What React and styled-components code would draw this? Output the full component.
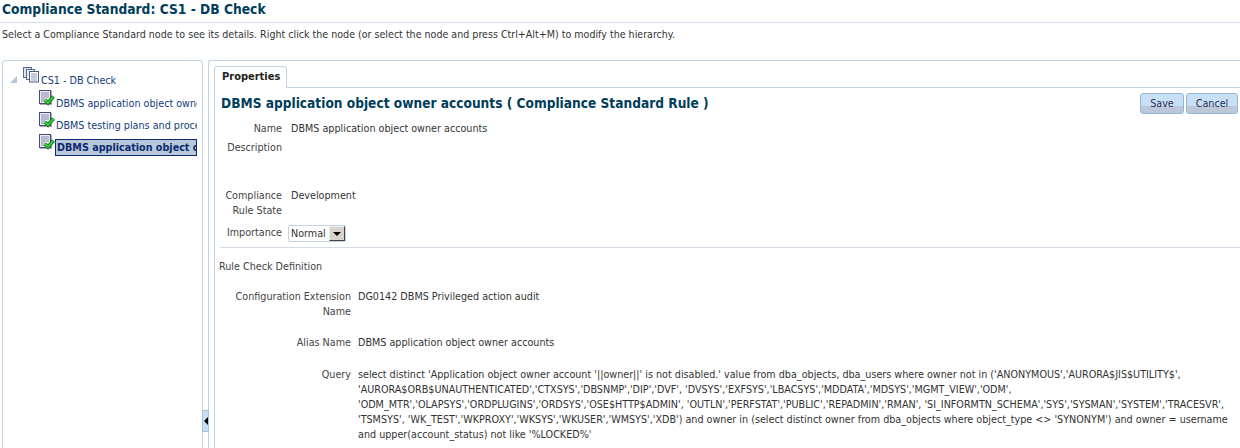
import React from "react";
import styled, { createGlobalStyle } from "styled-components";

const GlobalStyle = createGlobalStyle`
  html, body {
    margin: 0;
    padding: 0;
    background: #fff;
    overflow: hidden;
  }
  body {
    font-family: "DejaVu Sans Condensed", "DejaVu Sans", sans-serif;
    font-size: 10.7px;
    color: #333;
  }
`;

const Page = styled.div`
  width: 1240px;
  height: 448px;
  display: flex;
  flex-direction: column;
  overflow: hidden;
`;

const Title = styled.h1`
  margin: 0;
  padding: 0 0 0 2px;
  height: 23px;
  box-sizing: border-box;
  border-bottom: 1px solid #d6dbe8;
  font-size: 13.7px;
  line-height: 19px;
  font-weight: bold;
  color: #003d5b;
`;

const Hint = styled.div`
  padding-left: 2px;
  height: 37px;
  line-height: 22px;
  font-size: 10.6px;
`;

const Split = styled.div`
  flex: 1;
  display: flex;
  padding-left: 2px;
  min-height: 0;
`;

const TreePanel = styled.div`
  width: 201px;
  flex: none;
  box-sizing: border-box;
  border: 1px solid #c4d3e4;
  border-bottom: none;
  border-radius: 3px 3px 0 0;
  padding: 7px 5px 0 6px;
  overflow: hidden;
`;

const Splitter = styled.div`
  width: 5px;
  flex: none;
  display: flex;
  align-items: flex-end;
  padding-bottom: 16px;
  box-sizing: border-box;
`;

const SplitHandle = styled.div`
  width: 7px;
  height: 22px;
  flex: none;
  margin-left: -1px;
  position: relative;
  z-index: 1;
  box-sizing: border-box;
  background: #c8dff2;
  border: 1px solid #a3c4e0;
  display: flex;
  align-items: center;
  justify-content: center;
  &::before {
    content: "";
    border-style: solid;
    border-width: 4px 4px 4px 0;
    border-color: transparent #000 transparent transparent;
  }
`;

const RightPanel = styled.div`
  flex: 1;
  min-width: 0;
  box-sizing: border-box;
  border-left: 1px solid #c4d3e4;
  border-top: 1px solid #c4d3e4;
  border-radius: 3px 0 0 0;
  padding: 5px 0 0 5px;
  display: flex;
  flex-direction: column;
`;

const TabStrip = styled.div`
  display: flex;
  height: 21px;
  flex: none;
  border-bottom: 1px solid #c4d3e4;
`;

const Tab = styled.div`
  width: 73px;
  height: 22px;
  box-sizing: border-box;
  border: 1px solid #c4d3e4;
  border-bottom: none;
  border-radius: 3px 3px 0 0;
  background: #fff;
  font-size: 11px;
  font-weight: bold;
  color: #222;
  line-height: 20px;
  padding-left: 7px;
`;

const TabBody = styled.div`
  flex: 1;
  min-height: 0;
  border-left: 1px solid #c4d3e4;
  padding-left: 5px;
  display: flex;
  flex-direction: column;
`;

const HeadRow = styled.div`
  display: flex;
  justify-content: space-between;
  align-items: center;
  height: 31px;
  flex: none;
`;

const RuleTitle = styled.h2`
  margin: 0 0 2px;
  padding-left: 1px;
  font-size: 13.6px;
  font-weight: bold;
  color: #003d5b;
`;

const Buttons = styled.div`
  display: flex;
  gap: 2px;
  padding-right: 2px;
`;

const Button = styled.button`
  width: ${(p) => p.$w}px;
  height: 21px;
  padding: 0;
  border: 1px solid #90b8d8;
  border-radius: 3px;
  background: linear-gradient(#c8e0f4 0 63%, #bcc8d8 63% 100%);
  color: #2b2b55;
  font: inherit;
`;

const FormRow = styled.div`
  display: grid;
  grid-template-columns: ${(p) => p.$label}px 1fr;
  column-gap: ${(p) => p.$gap}px;
  margin-top: ${(p) => p.$top || 0}px;
  line-height: 15px;
`;

const Label = styled.div`
  text-align: right;
  color: #444;
`;

const Value = styled.div`
  color: #333;
  white-space: nowrap;
`;

const QueryLine = styled.div`
  height: 15px;
  line-height: 15px;
  white-space: nowrap;
`;

const Divider = styled.div`
  height: 1px;
  background: #d6dbe8;
  margin-top: 5px;
`;

const Section = styled.div`
  margin-top: 11px;
  margin-left: -1px;
  line-height: 15px;
  color: #444;
`;

const SelectBox = styled.div`
  display: inline-flex;
  align-items: center;
  justify-content: space-between;
  width: 58px;
  height: 17px;
  box-sizing: border-box;
  border: 1px solid #c4d3e4;
  border-radius: 2px;
  padding: 0 0 0 2px;
  margin-left: -3px;
`;

const SelectArrow = styled.span`
  width: 16px;
  height: 15px;
  box-sizing: border-box;
  background: #d8d4cc;
  border: 1px solid;
  border-color: #eee #444 #444 #eee;
  display: flex;
  align-items: center;
  justify-content: center;
  &::before {
    content: "";
    border-style: solid;
    border-width: 4px 4px 0 4px;
    border-color: #000 transparent transparent transparent;
  }
`;

const TreeRoot = styled.div`
  display: flex;
  align-items: flex-end;
  height: 19px;
  margin-bottom: 2px;
  color: #143c7c;
`;

const Twisty = styled.span`
  width: 0;
  height: 0;
  border-style: solid;
  border-width: 0 0 7px 7px;
  border-color: transparent transparent #b4c6d8 transparent;
  margin: 0 6px 4px 1px;
`;

const TreeItem = styled.div`
  display: flex;
  align-items: flex-end;
  height: ${(p) => (p.$selected ? 23 : 22)}px;
  margin-left: 30px;
  color: #143c7c;
  white-space: nowrap;
  overflow: hidden;
  width: 158px;
`;

const ItemText = styled.span`
  flex: 1;
  min-width: 0;
  overflow: hidden;
  line-height: 15px;
  padding-left: 1px;
  ${(p) =>
    p.$selected &&
    `
    background: #b8c8dc;
    outline: 1px solid #0a2a6c;
    outline-offset: -1px;
    font-weight: bold;
    color: #0a2a6c;
    line-height: 17px;
    padding-left: 2px;
  `}
`;

const RootSvg = styled.svg`
  flex: none;
  margin-right: 1px;
  margin-bottom: 4px;
`;

const RuleSvg = styled.svg`
  flex: none;
  align-self: flex-start;
  margin-top: 1px;
`;

const RootIcon = () => (
  <RootSvg width="17" height="16" viewBox="0 0 17 16">
    <rect x="0.5" y="0.5" width="8" height="10" fill="#dfe4f0" stroke="#5a6a8c" />
    <rect x="3.5" y="2.5" width="8" height="10" fill="#e8ecf4" stroke="#5a6a8c" />
    <rect x="6.5" y="4.5" width="9" height="10.5" fill="#fff" stroke="#4a5a7c" />
    <path d="M8 7h6M8 9h6M8 11h6M8 13h6" stroke="#8a9ab8" />
  </RootSvg>
);

const RuleIcon = () => (
  <RuleSvg width="16" height="17" viewBox="0 0 16 17">
    <rect x="1" y="1" width="12" height="14" fill="#a8a8b8" />
    <rect x="0.5" y="0.5" width="11" height="13" fill="#e8eaf4" stroke="#4a4a78" />
    <path d="M2 3h8M2 5h8M2 7h8M2 9h4M2 11h3" stroke="#8a8aa8" />
    <path d="M6 10l3 3 5.5-6.5" fill="none" stroke="#0e7a18" strokeWidth="3.6" />
    <path d="M6 10l3 3 5.5-6.5" fill="none" stroke="#3ed23e" strokeWidth="1.8" />
  </RuleSvg>
);

const treeItems = [
  { text: "DBMS application object owner accounts" },
  { text: "DBMS testing plans and procedures" },
  { text: "DBMS application object owner accounts", selected: true },
];

const queryLines = [
  "select distinct 'Application object owner account '||owner||' is not disabled.' value from dba_objects, dba_users where owner not in ('ANONYMOUS','AURORA$JIS$UTILITY$',",
  "'AURORA$ORB$UNAUTHENTICATED','CTXSYS','DBSNMP','DIP','DVF', 'DVSYS','EXFSYS','LBACSYS','MDDATA','MDSYS','MGMT_VIEW','ODM',",
  "'ODM_MTR','OLAPSYS','ORDPLUGINS','ORDSYS','OSE$HTTP$ADMIN', 'OUTLN','PERFSTAT','PUBLIC','REPADMIN','RMAN', 'SI_INFORMTN_SCHEMA','SYS','SYSMAN','SYSTEM','TRACESVR',",
  "'TSMSYS', 'WK_TEST','WKPROXY','WKSYS','WKUSER','WMSYS','XDB') and owner in (select distinct owner from dba_objects where object_type <> 'SYNONYM') and owner = username",
  "and upper(account_status) not like '%LOCKED%'",
];

export default function App() {
  return (
    <Page>
      <GlobalStyle />
      <Title>Compliance Standard: CS1 - DB Check</Title>
      <Hint>
        Select a Compliance Standard node to see its details. Right click the node (or select the node and press Ctrl+Alt+M) to modify the hierarchy.
      </Hint>
      <Split>
        <TreePanel>
          <TreeRoot>
            <Twisty />
            <RootIcon />
            CS1 - DB Check
          </TreeRoot>
          {treeItems.map((item, i) => (
            <TreeItem key={i} $selected={item.selected}>
              <RuleIcon />
              <ItemText $selected={item.selected}>{item.text}</ItemText>
            </TreeItem>
          ))}
        </TreePanel>
        <Splitter>
          <SplitHandle />
        </Splitter>
        <RightPanel>
          <TabStrip>
            <Tab>Properties</Tab>
          </TabStrip>
          <TabBody>
            <HeadRow>
              <RuleTitle>DBMS application object owner accounts ( Compliance Standard Rule )</RuleTitle>
              <Buttons>
                <Button $w={44}>Save</Button>
                <Button $w={52}>Cancel</Button>
              </Buttons>
            </HeadRow>
            <FormRow $label={62} $gap={9} $top={2}>
              <Label>Name</Label>
              <Value>DBMS application object owner accounts</Value>
            </FormRow>
            <FormRow $label={62} $gap={9} $top={4}>
              <Label>Description</Label>
              <Value />
            </FormRow>
            <FormRow $label={62} $gap={9} $top={33}>
              <Label>
                Compliance
                <br />
                Rule State
              </Label>
              <Value>Development</Value>
            </FormRow>
            <FormRow $label={62} $gap={9} $top={7}>
              <Label>Importance</Label>
              <Value>
                <SelectBox>
                  Normal
                  <SelectArrow />
                </SelectBox>
              </Value>
            </FormRow>
            <Divider />
            <Section>Rule Check Definition</Section>
            <FormRow $label={131} $gap={7} $top={15}>
              <Label>
                Configuration Extension
                <br />
                Name
              </Label>
              <Value>DG0142 DBMS Privileged action audit</Value>
            </FormRow>
            <FormRow $label={131} $gap={7} $top={16}>
              <Label>Alias Name</Label>
              <Value>DBMS application object owner accounts</Value>
            </FormRow>
            <FormRow $label={131} $gap={7} $top={17}>
              <Label>Query</Label>
              <Value>
                {queryLines.map((line, i) => (
                  <QueryLine key={i}>{line}</QueryLine>
                ))}
              </Value>
            </FormRow>
          </TabBody>
        </RightPanel>
      </Split>
    </Page>
  );
}
